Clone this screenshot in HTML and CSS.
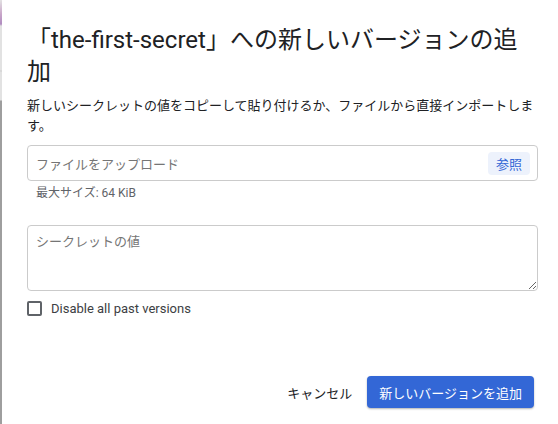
FILE: index.html
```html
<!DOCTYPE html>
<html lang="ja">
<head>
<meta charset="utf-8">
<link rel="stylesheet" href="styles.css">
</head>
<body>
<div class="edge"></div>
<div class="dialog">
  <h1 class="title">「the-first-secret」への新しいバージョンの追加</h1>
  <p class="desc">新しいシークレットの値をコピーして貼り付けるか、ファイルから直接インポートします。</p>
  <div class="upload">
    <span class="upload-ph">ファイルをアップロード</span>
    <button class="browse">参照</button>
  </div>
  <div class="hint">最大サイズ: 64 KiB</div>
  <textarea class="secret" placeholder="シークレットの値"></textarea>
  <label class="check-row">
    <span class="box"></span>
    <span class="check-label">Disable all past versions</span>
  </label>
  <div class="footer">
    <button class="btn-cancel">キャンセル</button>
    <button class="btn-primary">新しいバージョンを追加</button>
  </div>
</div>
</body>
</html>
```

FILE: styles.css
```css
* { box-sizing: border-box; }
html, body { margin: 0; padding: 0; }
body {
  width: 558px;
  height: 424px;
  display: flex;
  background: #fff;
  font-family: Roboto, "Noto Sans CJK JP", sans-serif;
  color: #202124;
  overflow: hidden;
}
.edge {
  width: 2px;
  flex: none;
  background: linear-gradient(to bottom, #e2e2e2 0, #c9a6c9 14px, #b08cc0 24px, #e2e2e2 26px, #e2e2e2 70px, #cfcfcf 71px, #e2e2e2 72px, #e2e2e2 100px, #9e9e9e 101px, #9e9e9e 100%);
}
.dialog {
  flex: 1;
  display: flex;
  flex-direction: column;
  padding: 24px 20px 16px 25px;
}
.title {
  margin: 0;
  font-size: 24px;
  line-height: 32px;
  font-weight: 400;
  color: #202124;
}
.desc {
  margin: 8px 0 0;
  font-size: 13px;
  line-height: 20px;
}
.upload {
  margin-top: 9px;
  height: 36px;
  border: 1px solid #cbcbcb;
  border-radius: 4px;
  display: flex;
  align-items: center;
  justify-content: space-between;
  padding: 0 7px 0 8px;
}
.upload-ph {
  font-size: 13px;
  color: #757575;
}
.browse {
  border: none;
  background: #edf2fc;
  color: #3367d6;
  font-family: inherit;
  font-size: 13px;
  height: 23px;
  width: 42px;
  padding: 0;
  border-radius: 4px;
}
.hint {
  margin-top: 4px;
  padding-left: 9px;
  font-size: 12px;
  line-height: 16px;
  color: #5f6368;
}
.secret {
  margin-top: 24px;
  height: 66px;
  width: 100%;
  border: 1px solid #cbcbcb;
  border-radius: 4px;
  padding: 8px;
  font-family: inherit;
  font-size: 13px;
  line-height: 16px;
  resize: vertical;
  display: block;
}
.secret::placeholder { color: #757575; }
.check-row {
  margin-top: 10px;
  display: flex;
  align-items: center;
  gap: 9px;
}
.box {
  width: 15px;
  height: 15px;
  border: 2px solid #5f6368;
  border-radius: 2px;
}
.check-label {
  font-size: 13px;
  color: #3c4043;
}
.footer {
  margin-top: auto;
  display: flex;
  justify-content: flex-end;
  align-items: center;
  gap: 7px;
  padding-right: 4px;
}
.btn-cancel {
  border: none;
  background: transparent;
  font-family: inherit;
  font-size: 13px;
  color: #202124;
  height: 32px;
  padding: 0 8px;
}
.btn-primary {
  border: none;
  background: #3367d6;
  color: #fff;
  font-family: inherit;
  font-size: 13px;
  height: 32px;
  padding: 0 12px;
  border-radius: 4px;
  box-shadow: 0 1px 2px rgba(0,0,0,0.3);
}
```
